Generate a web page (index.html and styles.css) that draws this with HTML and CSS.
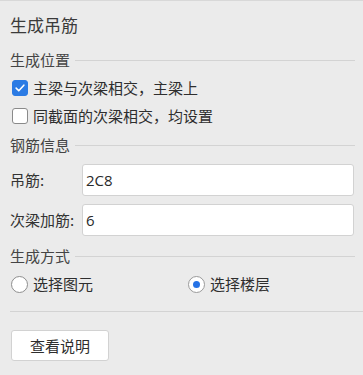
FILE: index.html
```html
<!DOCTYPE html>
<html lang="zh-CN">
<head>
<meta charset="utf-8">
<link rel="stylesheet" href="styles.css">
</head>
<body>
<div class="panel">
  <div class="title">生成吊筋</div>

  <div class="section">
    <span class="section-label">生成位置</span><span class="section-line"></span>
  </div>
  <label class="check-row">
    <span class="box checked"><svg viewBox="0 0 16 16" width="16" height="16"><path d="M3.6 8.2 L6.6 11.2 L12.4 4.8" fill="none" stroke="#fff" stroke-width="1.8" stroke-linecap="round" stroke-linejoin="round"/></svg></span>
    <span class="check-text">主梁与次梁相交，主梁上</span>
  </label>
  <label class="check-row">
    <span class="box"></span>
    <span class="check-text">同截面的次梁相交，均设置</span>
  </label>

  <div class="section sec2">
    <span class="section-label">钢筋信息</span><span class="section-line"></span>
  </div>
  <div class="form">
    <div class="field-label">吊筋:</div>
    <div class="input">2C8</div>
    <div class="field-label">次梁加筋:</div>
    <div class="input">6</div>
  </div>

  <div class="section sec3">
    <span class="section-label">生成方式</span><span class="section-line"></span>
  </div>
  <div class="radios">
    <label class="radio-row"><span class="radio"></span><span class="check-text">选择图元</span></label>
    <label class="radio-row"><span class="radio on"><span class="dot"></span></span><span class="check-text">选择楼层</span></label>
  </div>

  <div class="separator"></div>

  <div class="button">查看说明</div>
</div>
</body>
</html>
```

FILE: styles.css
```css
html, body {
  margin: 0;
  padding: 0;
}
body {
  background: #ebebeb;
  border-top: 1px solid #d8d8d8;
  width: 363px;
  height: 374px;
  overflow: hidden;
  font-family: "Noto Sans CJK SC", "Noto Sans", sans-serif;
  color: #333333;
}
.panel {
  padding: 12px 9px 0 10px;
}
.title {
  font-size: 17px;
  line-height: 24px;
  height: 24px;
  color: #3a3a3a;
}
.section {
  display: flex;
  align-items: center;
  height: 20px;
  margin-top: 13px;
  margin-right: -1px;
}
.section-label {
  font-size: 15px;
  line-height: 20px;
  color: #444;
  white-space: nowrap;
}
.section-line {
  flex: 1;
  height: 1px;
  background: #d3d3d3;
  margin-left: 5px;
}
.check-row {
  display: flex;
  align-items: center;
  height: 28px;
  padding-left: 2px;
}
.check-row:first-of-type {
  margin-top: 4px;
}
.section + .check-row {
  margin-top: 4px;
}
.box {
  width: 16px;
  height: 16px;
  box-sizing: border-box;
  border: 1px solid #8a8a8a;
  border-radius: 3px;
  background: #fff;
  display: flex;
  align-items: center;
  justify-content: center;
}
.box.checked {
  background: #2b7be4;
  border-color: #2b7be4;
}
.box svg {
  display: block;
}
.check-text {
  font-size: 15px;
  line-height: 20px;
  margin-left: 5px;
  color: #2e2e2e;
}
.sec2 {
  margin-top: 5px;
}
.form {
  display: grid;
  grid-template-columns: 72px 1fr;
  row-gap: 8px;
  margin-top: 9px;
  align-items: center;
}
.field-label {
  font-size: 15px;
  line-height: 20px;
  color: #333;
}
.input {
  height: 32px;
  box-sizing: border-box;
  background: #fff;
  border: 1px solid #d2d2d2;
  border-radius: 3px;
  padding-left: 3px;
  font-family: "Open Sans", "Noto Sans", sans-serif;
  font-size: 15px;
  line-height: 30px;
  color: #2a2a2a;
}
.sec3 {
  margin-top: 10px;
}
.radios {
  display: grid;
  grid-template-columns: 177px 1fr;
  margin-top: 4px;
  height: 28px;
}
.radio-row {
  display: flex;
  align-items: center;
  height: 28px;
  padding-left: 1px;
}
.radio {
  width: 17px;
  height: 17px;
  box-sizing: border-box;
  border: 1px solid #8e8e8e;
  border-radius: 50%;
  background: #fff;
  display: flex;
  align-items: center;
  justify-content: center;
}
.radio.on {
  border-color: #9a9a9a;
}
.dot {
  width: 7px;
  height: 7px;
  border-radius: 50%;
  background: #2673e6;
}
.separator {
  height: 1px;
  background: #d3d3d3;
  margin: 13px -9px 0 0;
}
.button {
  width: 98px;
  height: 31px;
  box-sizing: border-box;
  margin: 18px 0 0 1px;
  background: #fff;
  border: 1px solid #d2d2d2;
  border-radius: 3px;
  font-size: 15px;
  line-height: 29px;
  text-align: center;
  color: #2e2e2e;
}
```
